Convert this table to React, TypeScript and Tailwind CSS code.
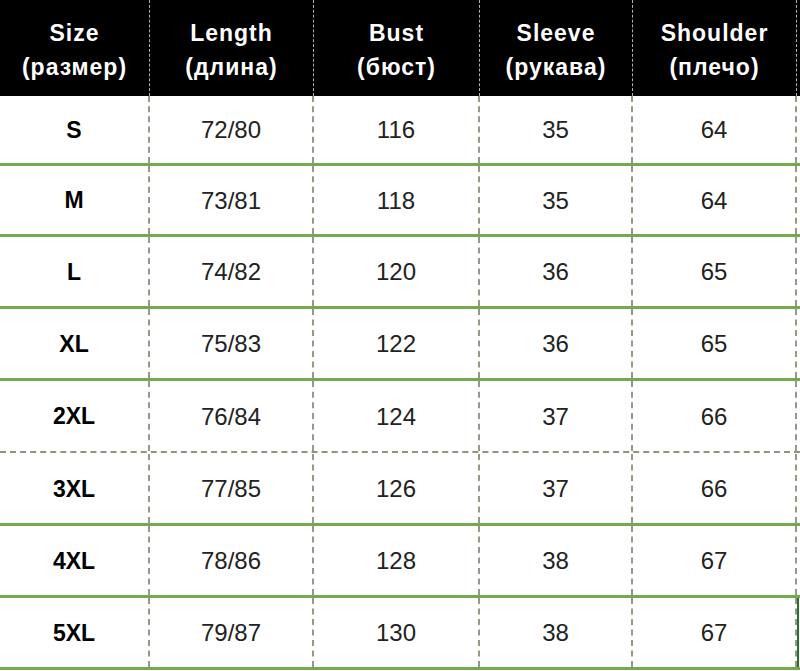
import React from 'react';

const headers = [
  ['Size', '(размер)'],
  ['Length', '(длина)'],
  ['Bust', '(бюст)'],
  ['Sleeve', '(рукава)'],
  ['Shoulder', '(плечо)'],
];

const rows = [
  ['S', '72/80', '116', '35', '64'],
  ['M', '73/81', '118', '35', '64'],
  ['L', '74/82', '120', '36', '65'],
  ['XL', '75/83', '122', '36', '65'],
  ['2XL', '76/84', '124', '37', '66'],
  ['3XL', '77/85', '126', '37', '66'],
  ['4XL', '78/86', '128', '38', '67'],
  ['5XL', '79/87', '130', '38', '67'],
];

const widths = ['w-[150px]', 'w-[164px]', 'w-[166px]', 'w-[153px]', 'w-[164px]'];
const heights = ['h-[70px]', 'h-[71px]', 'h-[72px]', 'h-[72px]', 'h-[72px]', 'h-[72px]', 'h-[72px]', 'h-[72px]'];

const App = () => {
  return (
    <div className="w-[800px] h-[671px] bg-white overflow-hidden" style={{ fontFamily: '"Liberation Sans", Arial, sans-serif' }}>
      {/* header */}
      <div className="flex h-[96px] bg-black">
        {headers.map((h, i) => (
          <div
            key={i}
            className={`${widths[i]} shrink-0 flex flex-col items-center justify-center pt-[4px] border-r border-dashed border-[#b0b0b0] text-white font-bold text-[23px] leading-[34px] tracking-[1px]`}
          >
            <span>{h[0]}</span>
            <span>{h[1]}</span>
          </div>
        ))}
        <div className="flex-1" />
      </div>

      {rows.map((r, ri) => (
        <div
          key={ri}
          className={`flex ${heights[ri]} ${ri === 4 ? 'border-b-2 border-dashed border-[#8e9480] mb-px' : 'border-b-[3px] border-solid border-[#74aa4a]'}`}
        >
          {r.map((c, ci) => (
            <div
              key={ci}
              className={`${widths[ci]} shrink-0 flex items-center justify-center pt-px border-r-2 border-dashed border-[#939a88] ${ci === 0 ? 'font-bold text-[23px] text-black' : 'text-[24px] text-[#222]'}`}
            >
              {c}
            </div>
          ))}
          <div className={`flex-1 ${ri === 7 ? 'border-l-2 border-[#2f6b2f]' : ''}`} />
        </div>
      ))}
    </div>
  );
};

export default App;
